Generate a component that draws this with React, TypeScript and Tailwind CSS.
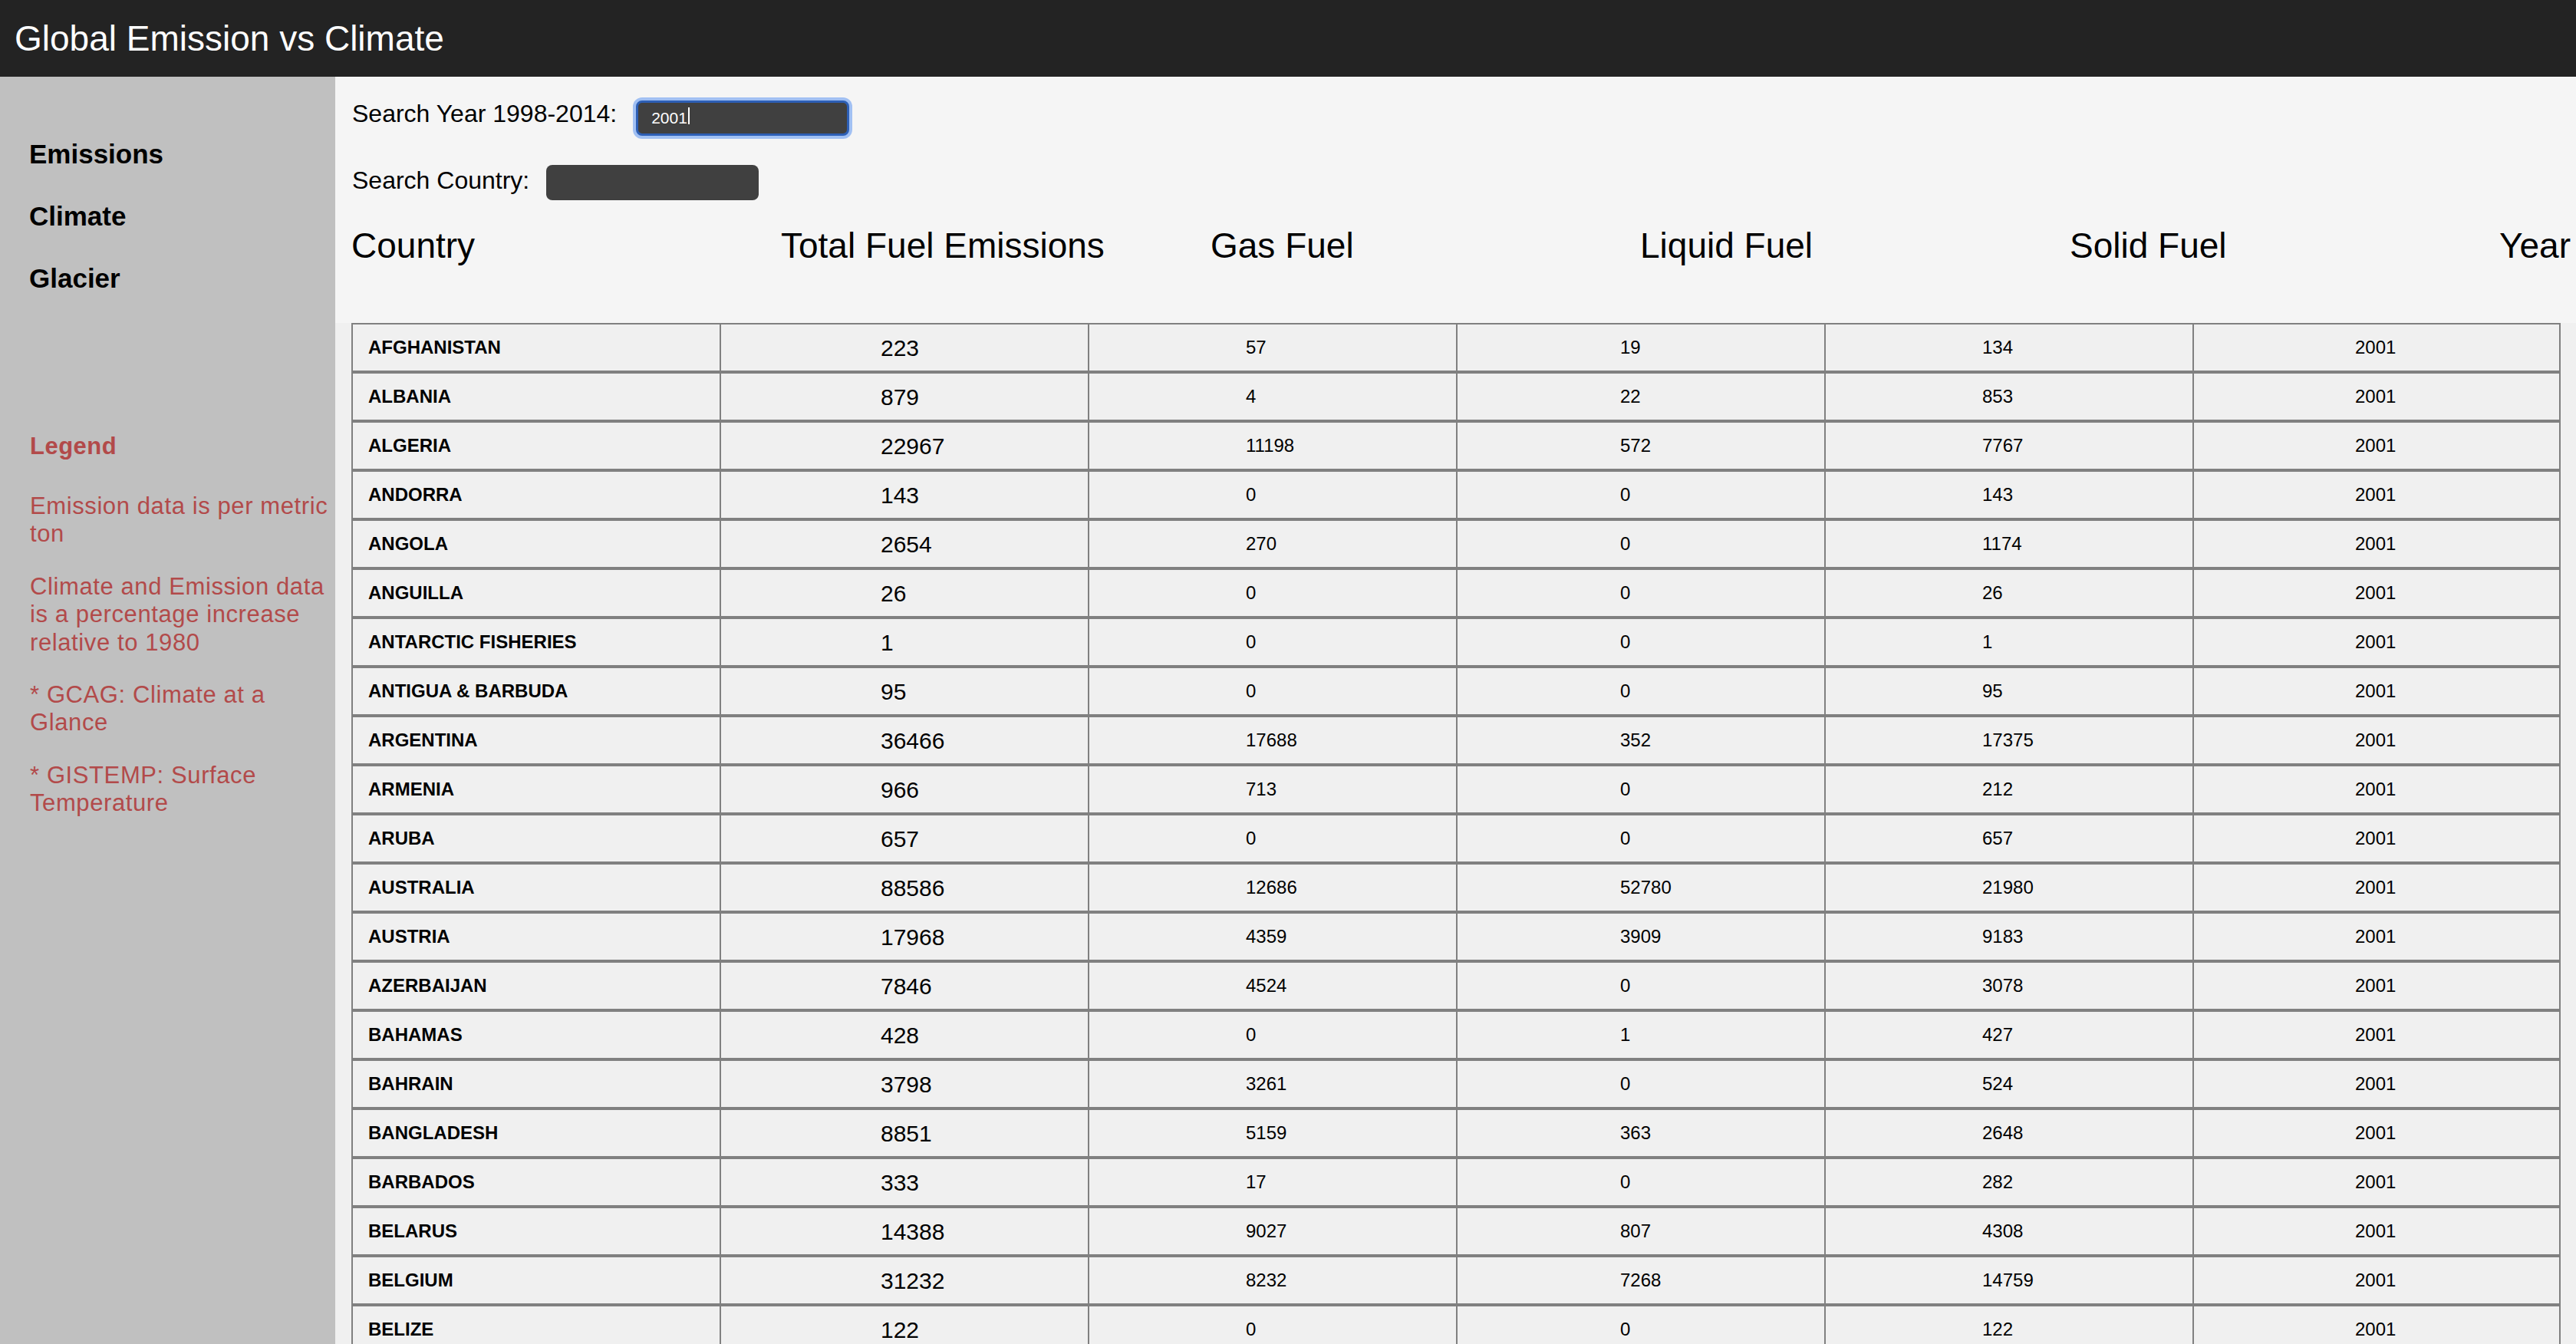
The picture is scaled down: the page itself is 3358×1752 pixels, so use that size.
import React from "react"

type Row = [string, number, number, number, number]

const rows: Row[] = [
  ["AFGHANISTAN", 223, 57, 19, 134],
  ["ALBANIA", 879, 4, 22, 853],
  ["ALGERIA", 22967, 11198, 572, 7767],
  ["ANDORRA", 143, 0, 0, 143],
  ["ANGOLA", 2654, 270, 0, 1174],
  ["ANGUILLA", 26, 0, 0, 26],
  ["ANTARCTIC FISHERIES", 1, 0, 0, 1],
  ["ANTIGUA & BARBUDA", 95, 0, 0, 95],
  ["ARGENTINA", 36466, 17688, 352, 17375],
  ["ARMENIA", 966, 713, 0, 212],
  ["ARUBA", 657, 0, 0, 657],
  ["AUSTRALIA", 88586, 12686, 52780, 21980],
  ["AUSTRIA", 17968, 4359, 3909, 9183],
  ["AZERBAIJAN", 7846, 4524, 0, 3078],
  ["BAHAMAS", 428, 0, 1, 427],
  ["BAHRAIN", 3798, 3261, 0, 524],
  ["BANGLADESH", 8851, 5159, 363, 2648],
  ["BARBADOS", 333, 17, 0, 282],
  ["BELARUS", 14388, 9027, 807, 4308],
  ["BELGIUM", 31232, 8232, 7268, 14759],
  ["BELIZE", 122, 0, 0, 122],
  ["BENIN", 507, 0, 0, 507],
]

const headers = ["Country", "Total Fuel Emissions", "Gas Fuel", "Liquid Fuel", "Solid Fuel", "Year"]

const cell = "h-[64px] border-t-2 border-b-2 border-l-2 border-[#808080] align-middle"

export default function App() {
  return (
    <div className="flex h-[1752px] w-[3358px] flex-col overflow-hidden font-['Liberation_Sans',Arial,sans-serif] text-black">
      <header className="flex h-[100px] shrink-0 items-center bg-[#232323] pl-[19px] text-[46px] text-white">
        Global Emission vs Climate
      </header>

      <div className="flex min-h-0 flex-1">
        <aside className="w-[437px] shrink-0 bg-[#c0c0c0] pl-[38px] pt-[83px]">
          <nav className="flex flex-col gap-[46px] text-[35px] font-bold leading-[35px]">
            <a href="#">Emissions</a>
            <a href="#">Climate</a>
            <a href="#">Glacier</a>
          </nav>

          <div className="mt-[184px] pl-px text-[#b24a4a]">
            <h3 className="text-[31px] font-bold leading-[36px] tracking-[0.5px]">Legend</h3>
            <div className="mt-[42px] flex flex-col gap-[32px] whitespace-nowrap text-[31px] leading-[36.4px] tracking-[0.6px]">
              <p>
                Emission data is per metric
                <br />
                ton
              </p>
              <p>
                Climate and Emission data
                <br />
                is a percentage increase
                <br />
                relative to 1980
              </p>
              <p>
                * GCAG: Climate at a
                <br />
                Glance
              </p>
              <p>
                * GISTEMP: Surface
                <br />
                Temperature
              </p>
            </div>
          </div>
        </aside>

        <main className="flex min-w-0 flex-1 flex-col bg-[#f5f5f5]">
          <div className="pl-[22px] pt-[24px] text-[32px]">
            <div className="flex items-center gap-[25px]">
              <label className="mb-[6px]">Search Year 1998-2014:</label>
              <div className="relative">
                <input
                  readOnly
                  value="2001"
                  className="h-[46px] w-[278px] rounded-[8px] border-[3px] border-[#2d5fb5] bg-[#404040] pl-[17px] text-[21px] text-white outline-none ring-4 ring-[#8cb3f2]/80"
                />
                <span className="absolute left-[68px] top-[14px] h-[22px] w-[2px] bg-white" />
              </div>
            </div>
            <div className="mt-[33px] flex items-center gap-[22px]">
              <label className="mb-[6px]">Search Country:</label>
              <input className="h-[46px] w-[277px] rounded-[8px] bg-[#404040] px-4 text-[21px] text-white outline-none" />
            </div>
          </div>

          <div className="mt-[32px] flex pl-[21px] text-[46px] leading-[46px]">
            {headers.map((h) => (
              <div key={h} className="w-[560px] shrink-0 whitespace-nowrap">
                {h}
              </div>
            ))}
          </div>

          <div className="mt-[78px] flex-1 bg-[#f0f0f0] pl-[21px]">
            <table className="w-[2880px] table-fixed border-separate border-spacing-0 bg-[#f0f0f0]">
              <tbody>
                {rows.map(([name, total, a, b, c]) => (
                  <tr key={name}>
                    <td className={`${cell} pl-[20px] text-[24px] font-bold`}>{name}</td>
                    <td className={`${cell} pl-[208px] text-[30px]`}>{total}</td>
                    <td className={`${cell} pl-[204px] text-[24px]`}>{a}</td>
                    <td className={`${cell} pl-[212px] text-[24px]`}>{b}</td>
                    <td className={`${cell} pl-[204px] text-[24px]`}>{c}</td>
                    <td className={`${cell} border-r-2 pl-[210px] text-[24px]`}>2001</td>
                  </tr>
                ))}
              </tbody>
            </table>
          </div>
        </main>
      </div>
    </div>
  )
}
